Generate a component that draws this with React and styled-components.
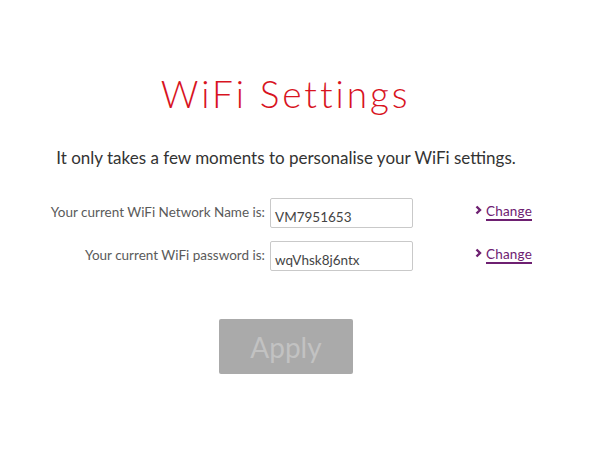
import React from "react";
import styled, { createGlobalStyle } from "styled-components";

const GlobalStyle = createGlobalStyle`
  html, body {
    margin: 0;
    padding: 0;
    background: #ffffff;
  }
  body {
    font-family: Lato, "Open Sans", "Liberation Sans", sans-serif;
  }
`;

const fields = [
  { label: "Your current WiFi Network Name is:", value: "VM7951653" },
  { label: "Your current WiFi password is:", value: "wqVhsk8j6ntx" },
];

export default function App() {
  return (
    <Page>
      <GlobalStyle />
      <Title>WiFi Settings</Title>
      <Intro>It only takes a few moments to personalise your WiFi settings.</Intro>
      <Form>
        {fields.map(({ label, value }) => (
          <Row key={label}>
            <Label>{label}</Label>
            <Field>{value}</Field>
            <ChangeLink href="#">
              <svg width="7" height="10" viewBox="0 0 7 10">
                <polyline points="1.5,1.5 5,5 1.5,8.5" fill="none" stroke="#6e2071" strokeWidth="2.4" />
              </svg>
              <span>Change</span>
            </ChangeLink>
          </Row>
        ))}
      </Form>
      <ApplyButton disabled>Apply</ApplyButton>
    </Page>
  );
}

const Page = styled.div`
  width: 600px;
  height: 454px;
  display: flex;
  flex-direction: column;
  align-items: center;
  padding-top: 70px;
  box-sizing: border-box;
`;

const Title = styled.h1`
  margin: 0 0 0 -29px;
  font-family: Lato, sans-serif;
  font-weight: 300;
  font-size: 37px;
  line-height: 48px;
  color: #d8141f;
  letter-spacing: 2.9px;
`;

const Intro = styled.p`
  margin: 29px 0 0 -28px;
  font-size: 17px;
  line-height: 22px;
  color: #333;
`;

const Form = styled.div`
  align-self: flex-start;
  margin: 29px 0 0 49px;
  display: flex;
  flex-direction: column;
  gap: 13px;
`;

const Row = styled.div`
  display: grid;
  grid-template-columns: 216px 143px 120px;
  column-gap: 5px;
  align-items: center;
`;

const Label = styled.span`
  text-align: right;
  font-size: 13.5px;
  color: #5a5a5a;
  padding-bottom: 2px;
`;

const Field = styled.div`
  height: 30px;
  box-sizing: border-box;
  border: 1px solid #c9c9c9;
  border-radius: 2px;
  padding: 10px 4px 0;
  font-size: 13.5px;
  color: #444;
`;

const ChangeLink = styled.a`
  justify-self: start;
  margin-left: 57px;
  display: flex;
  align-items: center;
  gap: 4px;
  color: #6e2071;
  font-size: 13.5px;
  text-decoration: none;
  padding-bottom: 3px;
  svg {
    margin-top: -3px;
  }
  span {
    border-bottom: 2px solid #6e2071;
    line-height: 16px;
    letter-spacing: 0.2px;
  }
`;

const ApplyButton = styled.button`
  margin: 48px 0 0 -28px;
  width: 134px;
  height: 55px;
  border: none;
  border-radius: 2px;
  background: #aaaaaa;
  color: #c2c2c2;
  font-family: Lato, sans-serif;
  font-size: 28px;
  font-weight: 400;
`;
